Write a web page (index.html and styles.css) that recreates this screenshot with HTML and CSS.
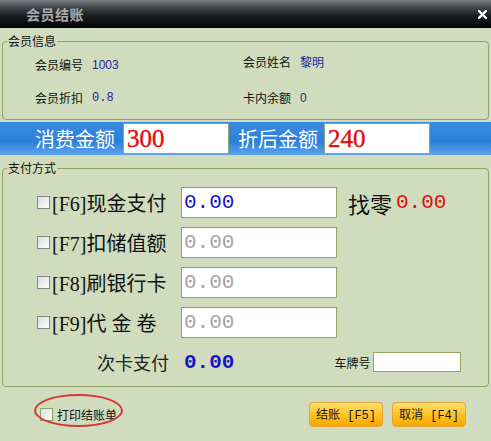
FILE: index.html
```html
<!DOCTYPE html>
<html lang="zh-CN">
<head>
  <meta charset="UTF-8" />
  <title>会员结账</title>
  <link rel="stylesheet" href="styles.css">
</head>
<body>

  <div class="window">
    <div class="titlebar">
      <span class="title">会员结账</span>
      <svg class="close" width="9" height="9" viewBox="0 0 9 9">
        <path d="M1 1 L8 8 M8 1 L1 8" stroke="#fff" stroke-width="2.4" stroke-linecap="square" />
      </svg>
    </div>

    <fieldset class="group">
      <legend>会员信息</legend>
      <div class="info-grid">
        <div class="info"><span>会员编号</span><span class="val">1003</span></div>
        <div class="info info-up"><span>会员姓名</span><span class="val">黎明</span></div>
        <div class="info"><span>会员折扣</span><span class="val mono">0.8</span></div>
        <div class="info"><span>卡内余额</span><span class="val">0</span></div>
      </div>
    </fieldset>

    <div class="amount-bar">
      <span class="amount-label">消费金额</span>
      <div class="amount-box">300</div>
      <span class="amount-label second">折后金额</span>
      <div class="amount-box">240</div>
    </div>

    <fieldset class="group pay">
      <legend>支付方式</legend>
      <div class="pay-rows">
        <div class="pay-row">
          <span class="check"></span>
          <span class="pay-label">[F6]现金支付</span>
          <div class="pay-box active">0.00</div>
          <span class="change-label">找零</span>
          <span class="change-val">0.00</span>
        </div>
        <div class="pay-row">
          <span class="check"></span>
          <span class="pay-label">[F7]扣储值额</span>
          <div class="pay-box">0.00</div>
        </div>
        <div class="pay-row">
          <span class="check"></span>
          <span class="pay-label">[F8]刷银行卡</span>
          <div class="pay-box">0.00</div>
        </div>
        <div class="pay-row">
          <span class="check"></span>
          <span class="pay-label">[F9]代 金 卷</span>
          <div class="pay-box">0.00</div>
        </div>
        <div class="card-row">
          <span class="card-label">次卡支付</span>
          <span class="card-val">0.00</span>
          <span class="plate-label">车牌号</span>
          <div class="plate-box"></div>
        </div>
      </div>
    </fieldset>

    <div class="footer">
      <label class="print">
        <span class="check green"></span>
        <span>打印结账单</span>
      </label>
      <div class="buttons">
        <button class="btn">结账 [F5]</button>
        <button class="btn">取消 [F4]</button>
      </div>
    </div>
  </div>

</body>
</html>
```

FILE: styles.css
```css
* {
  box-sizing: border-box;
}

body {
  margin: 0;
  font-family: "Noto Sans CJK SC", sans-serif;
  background: #d0dcbd;
}

.window {
  width: 491px;
  height: 441px;
  background: #d0dcbd;
  overflow: hidden;
}

.titlebar {
  height: 28px;
  display: flex;
  align-items: center;
  justify-content: space-between;
  padding: 0 4px 0 26px;
  background: linear-gradient(#7c8084 0, #4a4e52 22%, #1c1e21 55%, #000 100%);
}

.title {
  font-size: 14px;
  font-weight: bold;
  color: #aaacae;
  line-height: 14px;
  letter-spacing: 0.5px;
}

.close {
  display: block;
}

/* group boxes */
.group {
  margin: 6px 2px 0;
  padding: 0 0 5px;
  border: 1px solid #8ea65e;
  border-radius: 4px;
  min-width: 0;
}

.group legend {
  margin-left: 4px;
  padding: 0 1px;
  font-size: 12px;
  line-height: 14px;
  color: #111;
}

.info-grid {
  display: grid;
  grid-template-columns: 208px auto;
  grid-auto-rows: 33px;
  padding-left: 32px;
}

.info {
  display: flex;
  align-items: center;
  gap: 9px;
  font-size: 12px;
  color: #111;
}

.info-up {
  margin-bottom: 6px;
}

.val {
  color: #2424a0;
  font-family: "Liberation Sans", "Noto Sans CJK SC", sans-serif;
  font-size: 12px;
}

.val.mono {
  font-family: "Liberation Mono", monospace;
}

/* blue amount bar */
.amount-bar {
  margin-top: 2px;
  height: 33px;
  display: flex;
  align-items: center;
  padding-left: 35px;
  background: linear-gradient(#3a8ce2 0, #2c7fd9 60%, #5ea6ee 100%);
}

.amount-label {
  font-size: 20px;
  color: #fff;
  width: 88px;
  line-height: 20px;
}

.amount-label.second {
  width: 86px;
  margin-left: 9px;
}

.amount-box {
  width: 106px;
  height: 31px;
  background: #fff;
  border: 1px solid #8ea680;
  padding-left: 3px;
  font-family: "Liberation Serif", serif;
  font-size: 25px;
  line-height: 29px;
  color: #e01010;
  -webkit-text-stroke: 0.4px #e01010;
}

/* payment rows */
.pay-rows {
  padding: 12px 0 7px 34px;
  display: flex;
  flex-direction: column;
  gap: 9px;
}

.pay-row {
  display: flex;
  align-items: center;
  height: 31px;
}

.check {
  width: 13px;
  height: 13px;
  border: 1px solid #858585;
  background: linear-gradient(135deg, #dcdcdc, #fff);
  margin-right: 2px;
  flex-shrink: 0;
}

.check.green {
  border-color: #8aa860;
}

.pay-label {
  width: 129px;
  font-family: "Liberation Serif", "Noto Sans CJK SC", serif;
  font-size: 20px;
  color: #111;
  white-space: pre;
}

.pay-box {
  width: 156px;
  height: 31px;
  background: #fff;
  border: 1px solid #8ea65e;
  padding-left: 2px;
  font-family: "Liberation Mono", monospace;
  font-size: 21px;
  line-height: 29px;
  color: #a4a4a4;
}

.pay-box.active {
  color: #1616c8;
}

.change-label {
  margin-left: 11px;
  font-size: 22px;
  color: #111;
}

.change-val {
  margin-left: 4px;
  font-family: "Liberation Mono", monospace;
  font-size: 21px;
  color: #e01010;
}

.card-row {
  display: flex;
  align-items: center;
  height: 24px;
  margin-top: 3px;
  padding-left: 60px;
}

.card-label {
  width: 87px;
  font-size: 18px;
  color: #222;
}

.card-val {
  font-family: "Liberation Mono", monospace;
  font-weight: bold;
  font-size: 21px;
  color: #1616c8;
}

.plate-label {
  margin-left: 100px;
  font-size: 12px;
  color: #111;
}

.plate-box {
  margin-left: 3px;
  width: 88px;
  height: 20px;
  background: #fff;
  border: 1px solid #8ea65e;
}

/* footer */
.footer {
  height: 54px;
  display: flex;
  align-items: center;
  justify-content: space-between;
  padding: 0 25px 0 40px;
}

.print {
  position: relative;
  display: flex;
  align-items: center;
  gap: 2px;
  font-size: 12px;
  color: #111;
}

.print::before {
  content: "";
  position: absolute;
  left: -6px;
  top: -12px;
  width: 85px;
  height: 29px;
  border: 2px solid #d43838;
  border-radius: 50%;
}

.buttons {
  display: flex;
  gap: 9px;
}

.btn {
  width: 74px;
  height: 25px;
  padding: 0;
  border: 1px solid #e5a537;
  border-radius: 4px;
  background: linear-gradient(#ffe070 0, #ffc62a 45%, #f8a800 100%);
  font-family: "Liberation Mono", "Noto Sans CJK SC", monospace;
  font-size: 12px;
  color: #1a1a1a;
}
```
